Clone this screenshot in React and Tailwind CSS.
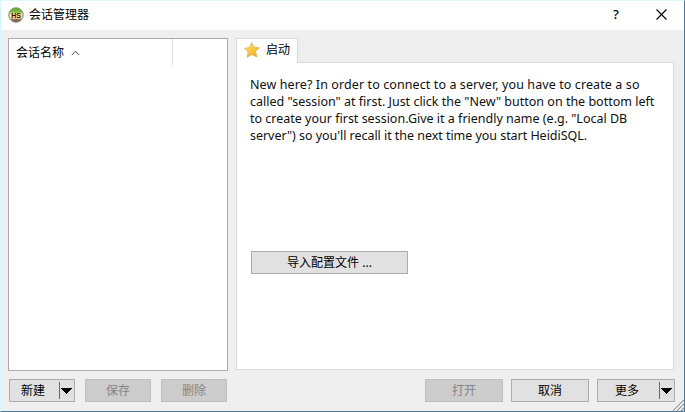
import React from "react";

const lines = [
  { text: "New here? In order to connect to a server, you have to create a so", cls: "tracking-[0.1px]" },
  { text: "called \"session\" at first. Just click the \"New\" button on the bottom left", cls: "tracking-[0px]" },
  { text: "to create your first session.Give it a friendly name (e.g. \"Local DB", cls: "tracking-[0px]" },
  { text: "server\") so you'll recall it the next time you start HeidiSQL.", cls: "tracking-[-0.04px]" },
];

function AppIcon() {
  return (
    <svg className="-mt-[2px] h-4 w-4" viewBox="0 0 16 16">
      <defs>
        <linearGradient id="ball" x1="0" y1="0" x2="0" y2="1">
          <stop offset="0" stopColor="#4fa521" />
          <stop offset="0.3" stopColor="#7cc03f" />
          <stop offset="0.42" stopColor="#e4e293" />
          <stop offset="0.7" stopColor="#f3dfa0" />
          <stop offset="0.82" stopColor="#8f6a50" />
          <stop offset="1" stopColor="#6b5546" />
        </linearGradient>
      </defs>
      <circle cx="8" cy="8" r="7.3" fill="url(#ball)" stroke="#8a9482" strokeWidth="1" />
      <text x="8" y="10.5" textAnchor="middle" fontFamily="Liberation Sans, sans-serif" fontWeight="700" fontSize="7" fill="#4a1004">HS</text>
    </svg>
  );
}

function StarIcon() {
  return (
    <svg className="-mt-[3px] h-4 w-4" viewBox="0 0 16 16">
      <defs>
        <linearGradient id="gold" x1="0" y1="0" x2="0.8" y2="1">
          <stop offset="0" stopColor="#fde08a" />
          <stop offset="0.55" stopColor="#f7c843" />
          <stop offset="1" stopColor="#e8a52a" />
        </linearGradient>
      </defs>
      <path d="M7.7 .7 10 5.3 15.4 5.7 11.6 9.5 13 15 8 12.6 3.3 15.2 4.1 9.9.5 6.3 5.6 5.5Z" fill="url(#gold)" stroke="#dfac45" strokeWidth=".7" strokeLinejoin="round" />
    </svg>
  );
}

function Button({ children, disabled, split, className }) {
  const tone = disabled ? "border-[#bfbfbf] bg-[#cccccc] text-[#858585]" : "border-[#adadad] bg-[#e1e1e1] text-black";
  return (
    <button className={`flex h-[23px] shrink-0 items-center border ${tone} ${className}`}>
      <span className={`flex-1 text-center leading-[21px] ${split ? "pr-[3px]" : ""}`}>{children}</span>
      {split && (
        <span className="flex h-full w-[15px] items-center">
          <span className="h-[17px] w-px bg-[#696969]" />
          <svg className="ml-px h-[6px] w-[11px]" viewBox="0 0 11 6" shapeRendering="crispEdges">
            <path d="M0 0H11L5.5 6Z" fill="#000" />
          </svg>
        </span>
      )}
    </button>
  );
}

export default function App() {
  return (
    <div className="relative flex h-[412px] w-[685px] flex-col overflow-hidden border border-t-[#d9fbfb] border-r-[#4d7896] border-b-[#4d7896] border-l-[#d4f5fc] bg-[#efefef] font-['Noto_Sans','Noto_Sans_CJK_SC',sans-serif] text-[12px] text-black">
      <header className="flex h-[29px] shrink-0 items-center bg-white pl-[7px]">
        <AppIcon />
        <h1 className="-mt-[2px] ml-[5px] flex-1 leading-[20px]">会话管理器</h1>
        <span className="-mt-[4px] w-[10px] text-center text-[13px] leading-[20px] font-medium">?</span>
        <svg className="-mt-[3px] mr-[17px] ml-[35px] h-[11px] w-[11px]" viewBox="0 0 11 11">
          <path d="M.5 .5 10.5 10.5M10.5 .5 .5 10.5" stroke="#000" strokeWidth="1.1" fill="none" />
        </svg>
      </header>

      <main className="mt-[8px] flex h-[333px] shrink-0 gap-[8px] pl-[7px]">
        <section className="h-[333px] w-[220px] border border-[#a9abb0] bg-white">
          <div className="flex h-[26px] w-[164px] items-center border-r border-[#e2e2e2] pt-px pl-[7px]">
            <span className="leading-[20px]">会话名称</span>
            <svg className="ml-[7px] h-[6px] w-[9px]" viewBox="0 0 9 6">
              <path d="M.8 5 4.5 1.2 8.2 5" stroke="#444" fill="none" />
            </svg>
          </div>
        </section>

        <section className="flex w-[438px] flex-col">
          <div className="z-10 flex h-[25px] w-[62px] items-center border border-b-0 border-[#d9d9d9] bg-white pl-[7px]">
            <StarIcon />
            <span className="-mt-[2px] ml-[6px] leading-[20px]">启动</span>
          </div>
          <div className="-mt-px h-[308px] border border-[#d9d9d9] bg-white px-[13px] pt-[13px]">
            <div className="text-[12.5px] leading-[17px] text-[#101010]">
              {lines.map((l) => (
                <div key={l.text} className="whitespace-nowrap">
                  <span className={l.cls}>{l.text}</span>
                </div>
              ))}
            </div>
            <Button className="mt-[107px] ml-px w-[157px]">导入配置文件 ...</Button>
          </div>
        </section>
      </main>

      <footer className="mt-[8px] flex pr-[9px] pl-[8px]">
        <div className="flex gap-[10px]">
          <Button className="w-[66px]" split>新建</Button>
          <Button className="w-[66px]" disabled>保存</Button>
          <Button className="w-[66px]" disabled>删除</Button>
        </div>
        <div className="ml-auto flex gap-[8px]">
          <Button className="w-[78px]" disabled>打开</Button>
          <Button className="w-[78px]">取消</Button>
          <Button className="w-[78px]" split>更多</Button>
        </div>
      </footer>

      <svg className="absolute right-0 bottom-0 h-[11px] w-[11px]" viewBox="0 0 11 11">
        <path d="M0 11 11 0M4 11 11 4M8 11 11 8" stroke="#929292" strokeWidth="1.2" />
        <path d="M1.2 11 11 1.2M5.2 11 11 5.2" stroke="#fff" strokeWidth=".7" />
      </svg>
    </div>
  );
}
